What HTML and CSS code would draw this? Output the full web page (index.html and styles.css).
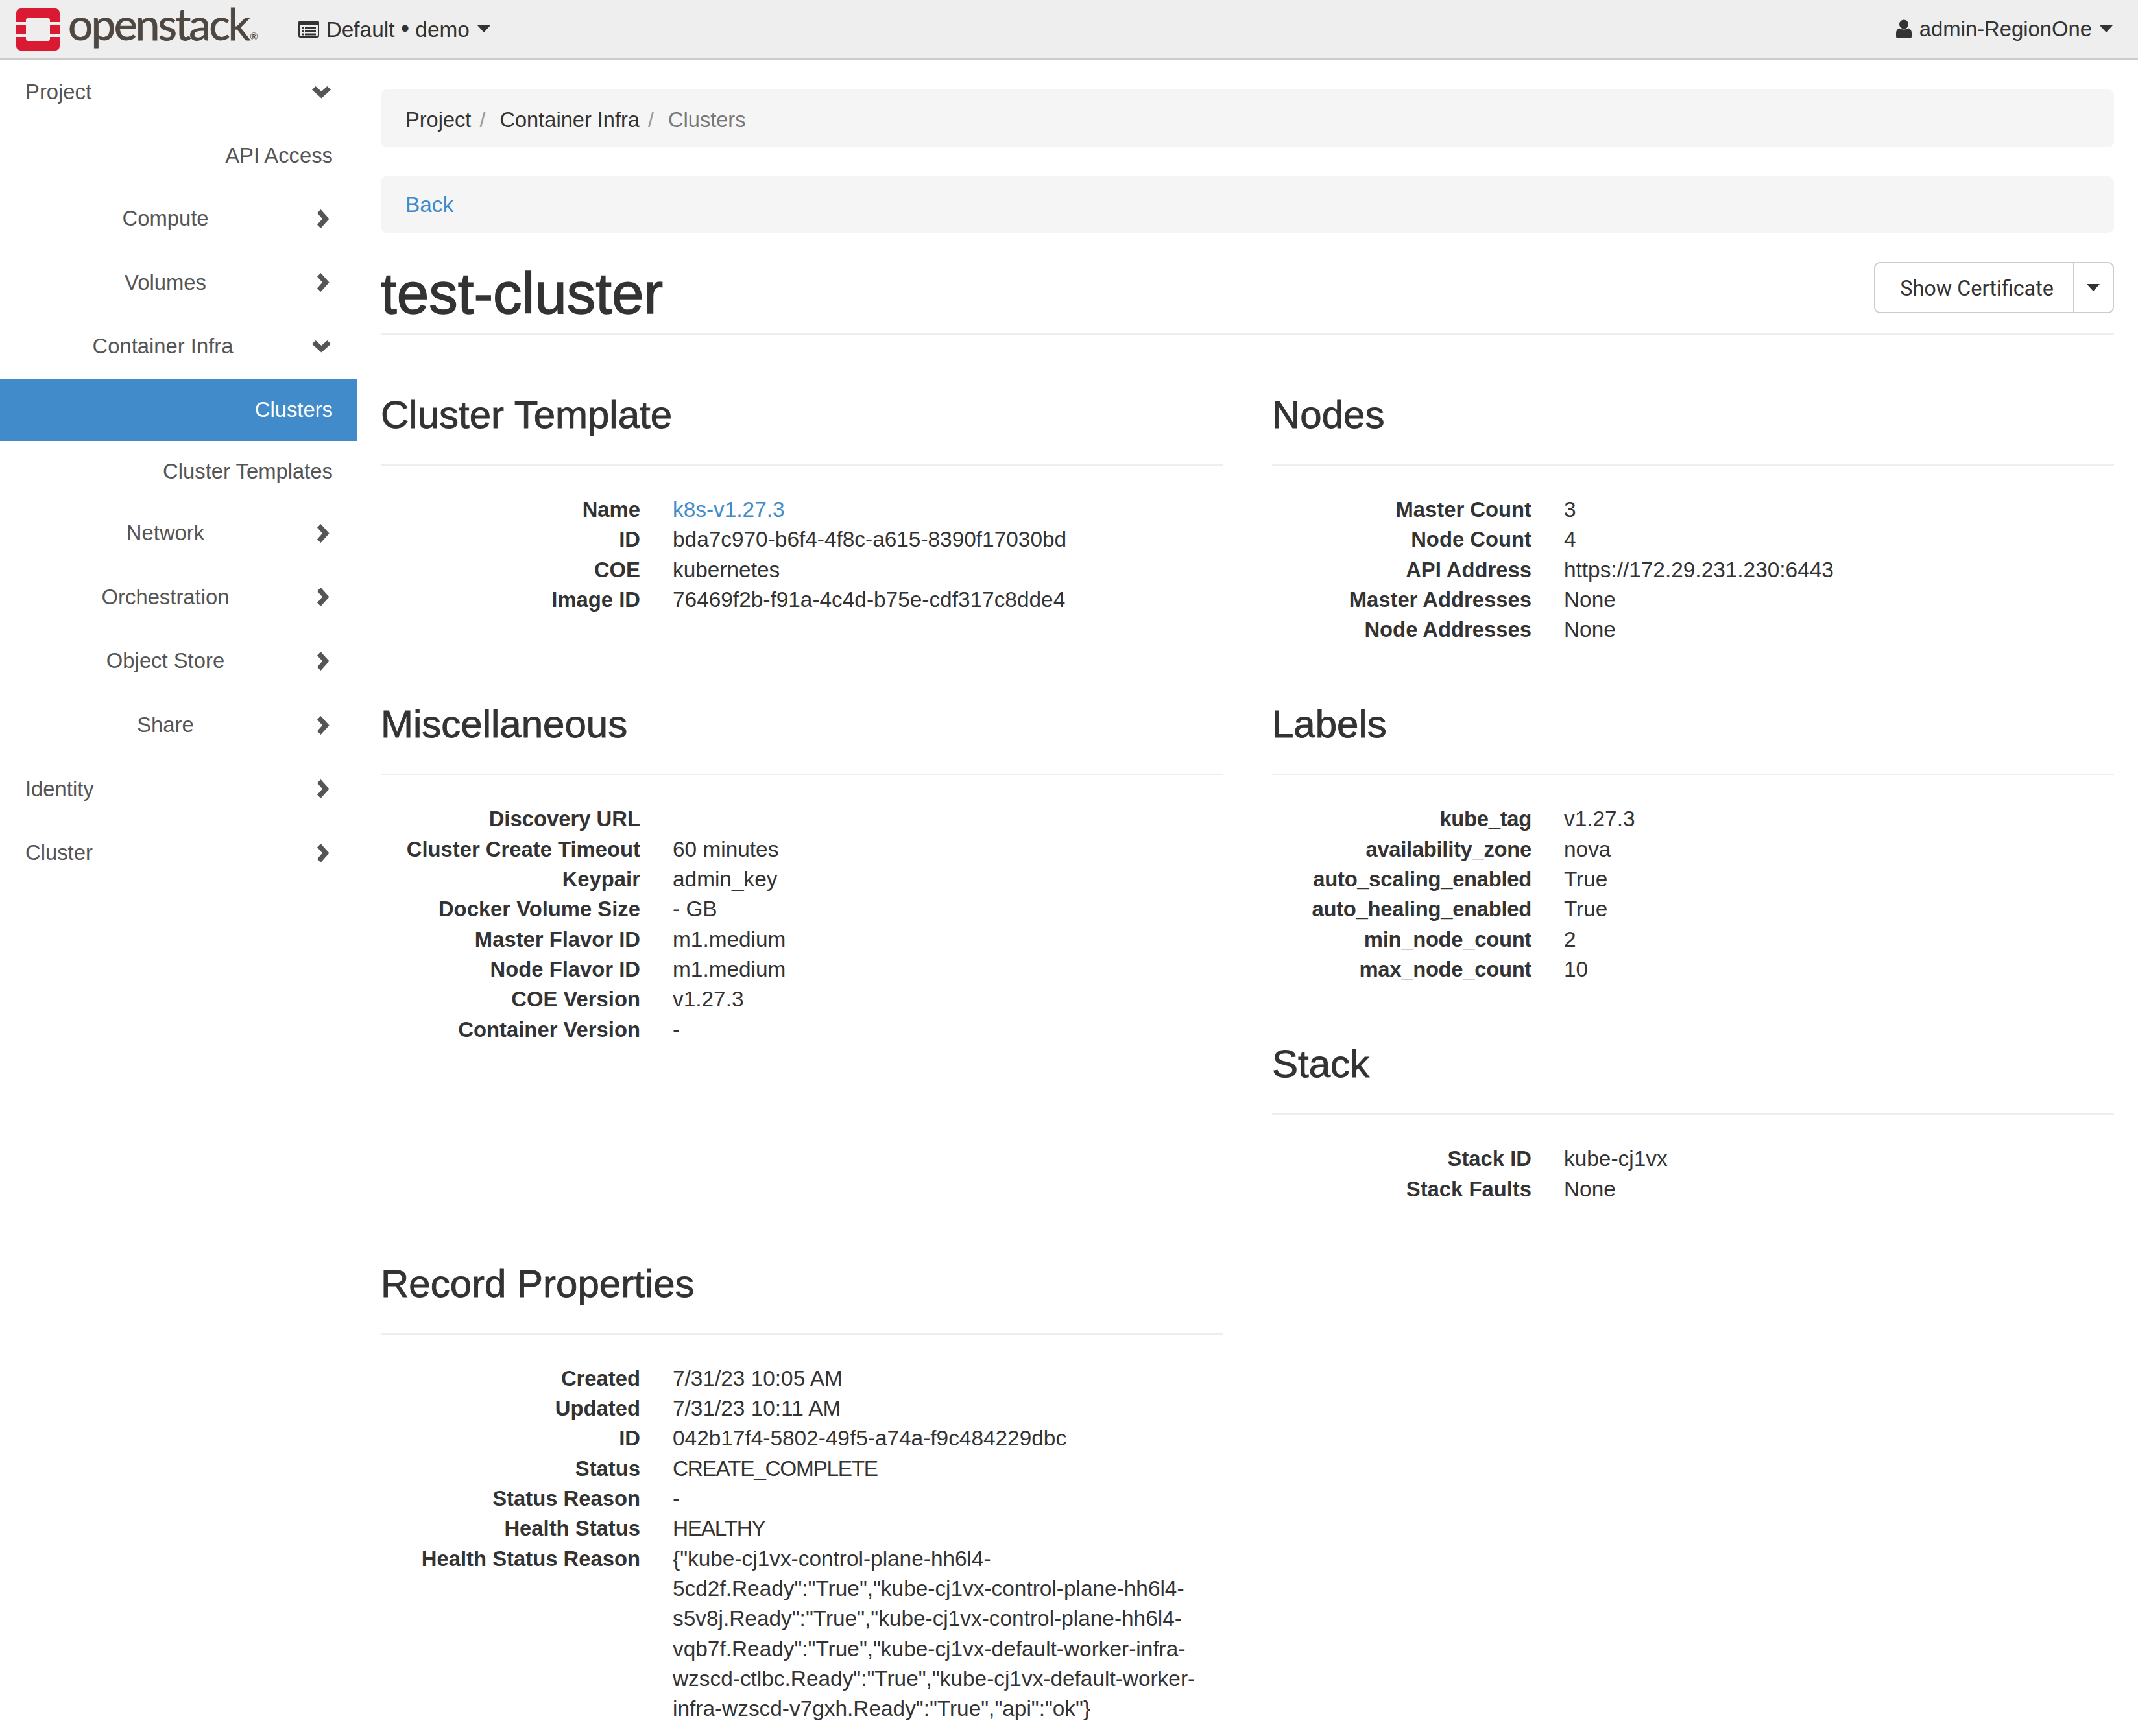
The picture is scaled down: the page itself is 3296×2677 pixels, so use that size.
FILE: index.html
```html
<!DOCTYPE html>
<html lang="en">
<head>
    <meta charset="UTF-8">
    <title>Cluster Details - OpenStack Dashboard</title>
    <link rel="stylesheet" href="styles.css">
</head>
<body>
    <header class="topbar">
        <a class="brand">
            <svg class="brand-mark" viewBox="0 0 67 65">
                <path fill="#da1a32" fill-rule="evenodd" d="M7 0H60A7 7 0 0 1 67 7V21H52V18A3 3 0 0 0 49 15H18A3 3 0 0 0 15 18V21H0V7A7 7 0 0 1 7 0ZM0 25H15V40H0ZM52 25H67V40H52ZM0 44H15V47A3 3 0 0 0 18 50H49A3 3 0 0 0 52 47V44H67V58A7 7 0 0 1 60 65H7A7 7 0 0 1 0 58Z"/>
            </svg>
            <span class="brand-name">openstack<span class="brand-reg">®</span></span>
        </a>
        <div class="context-menu">
            <svg class="icon-context" viewBox="0 0 32 26">
                <path fill="#333" fill-rule="evenodd" d="M3 0H29A3 3 0 0 1 32 3V23A3 3 0 0 1 29 26H3A3 3 0 0 1 0 23V3A3 3 0 0 1 3 0ZM2 7V22A2 2 0 0 0 4 24H28A2 2 0 0 0 30 22V7Z"/>
                <path fill="#333" d="M5 9.5H8V12.5H5ZM10 9.5H27V12.5H10ZM5 14.5H8V17.5H5ZM10 14.5H27V17.5H10ZM5 19.5H8V22.5H5ZM10 19.5H27V22.5H10Z"/>
            </svg>
            <span>Default <span class="dot">•</span> demo</span>
            <span class="caret"></span>
        </div>
        <div class="user-menu">
            <svg class="icon-user" viewBox="0 0 24 29">
                <circle cx="12" cy="7.5" r="7" fill="#333"/>
                <path fill="#333" d="M5 13.5C7 16 17 16 19 13.5C22 14.5 24 17 24 21V26A3 3 0 0 1 21 29H3A3 3 0 0 1 0 26V21C0 17 2 14.5 5 13.5Z"/>
            </svg>
            <span>admin-RegionOne</span>
            <span class="caret"></span>
        </div>
    </header>

    <div class="layout">
        <nav class="sidebar">
            <a class="nav-row nav-top">
                <span class="nav-label">Project</span>
                <svg class="chevron-down" viewBox="0 0 29 19"><polygon points="0,5.5 5.5,0 14.5,8 23.5,0 29,5.5 14.5,18.5"/></svg>
            </a>
            <a class="nav-leaf">API Access</a>
            <a class="nav-row">
                <span class="nav-label">Compute</span>
                <svg class="chevron-right" viewBox="0 0 19 29"><polygon points="5.5,0 18.5,14.5 5.5,29 0,23.5 8,14.5 0,5.5"/></svg>
            </a>
            <a class="nav-row">
                <span class="nav-label">Volumes</span>
                <svg class="chevron-right" viewBox="0 0 19 29"><polygon points="5.5,0 18.5,14.5 5.5,29 0,23.5 8,14.5 0,5.5"/></svg>
            </a>
            <a class="nav-row">
                <span class="nav-label">Container Infra</span>
                <svg class="chevron-down" viewBox="0 0 29 19"><polygon points="0,5.5 5.5,0 14.5,8 23.5,0 29,5.5 14.5,18.5"/></svg>
            </a>
            <a class="nav-leaf active">Clusters</a>
            <a class="nav-leaf nav-leaf-last">Cluster Templates</a>
            <a class="nav-row">
                <span class="nav-label">Network</span>
                <svg class="chevron-right" viewBox="0 0 19 29"><polygon points="5.5,0 18.5,14.5 5.5,29 0,23.5 8,14.5 0,5.5"/></svg>
            </a>
            <a class="nav-row">
                <span class="nav-label">Orchestration</span>
                <svg class="chevron-right" viewBox="0 0 19 29"><polygon points="5.5,0 18.5,14.5 5.5,29 0,23.5 8,14.5 0,5.5"/></svg>
            </a>
            <a class="nav-row">
                <span class="nav-label">Object Store</span>
                <svg class="chevron-right" viewBox="0 0 19 29"><polygon points="5.5,0 18.5,14.5 5.5,29 0,23.5 8,14.5 0,5.5"/></svg>
            </a>
            <a class="nav-row">
                <span class="nav-label">Share</span>
                <svg class="chevron-right" viewBox="0 0 19 29"><polygon points="5.5,0 18.5,14.5 5.5,29 0,23.5 8,14.5 0,5.5"/></svg>
            </a>
            <a class="nav-row nav-top">
                <span class="nav-label">Identity</span>
                <svg class="chevron-right" viewBox="0 0 19 29"><polygon points="5.5,0 18.5,14.5 5.5,29 0,23.5 8,14.5 0,5.5"/></svg>
            </a>
            <a class="nav-row nav-top">
                <span class="nav-label">Cluster</span>
                <svg class="chevron-right" viewBox="0 0 19 29"><polygon points="5.5,0 18.5,14.5 5.5,29 0,23.5 8,14.5 0,5.5"/></svg>
            </a>
        </nav>

        <main class="content">
            <ol class="breadcrumb">
                <li>Project<span class="crumb-sep">/</span></li>
                <li>Container Infra<span class="crumb-sep">/</span></li>
                <li class="crumb-current">Clusters</li>
            </ol>
            <div class="back-bar"><a class="link">Back</a></div>

            <div class="page-header">
                <h1>test-cluster</h1>
                <div class="btn-group">
                    <button class="btn">Show Certificate</button>
                    <button class="btn btn-toggle"><span class="caret"></span></button>
                </div>
            </div>

            <div class="detail-grid">
                <section class="detail">
                    <h2>Cluster Template</h2>
                    <dl>
                        <dt>Name</dt><dd><a class="link">k8s-v1.27.3</a></dd>
                        <dt>ID</dt><dd>bda7c970-b6f4-4f8c-a615-8390f17030bd</dd>
                        <dt>COE</dt><dd>kubernetes</dd>
                        <dt>Image ID</dt><dd>76469f2b-f91a-4c4d-b75e-cdf317c8dde4</dd>
                    </dl>
                </section>
                <section class="detail">
                    <h2>Nodes</h2>
                    <dl>
                        <dt>Master Count</dt><dd>3</dd>
                        <dt>Node Count</dt><dd>4</dd>
                        <dt>API Address</dt><dd>https://172.29.231.230:6443</dd>
                        <dt>Master Addresses</dt><dd>None</dd>
                        <dt>Node Addresses</dt><dd>None</dd>
                    </dl>
                </section>
                <section class="detail">
                    <h2>Miscellaneous</h2>
                    <dl>
                        <dt>Discovery URL</dt><dd></dd>
                        <dt>Cluster Create Timeout</dt><dd>60 minutes</dd>
                        <dt>Keypair</dt><dd>admin_key</dd>
                        <dt>Docker Volume Size</dt><dd>- GB</dd>
                        <dt>Master Flavor ID</dt><dd>m1.medium</dd>
                        <dt>Node Flavor ID</dt><dd>m1.medium</dd>
                        <dt>COE Version</dt><dd>v1.27.3</dd>
                        <dt>Container Version</dt><dd>-</dd>
                    </dl>
                </section>
                <div>
                    <section class="detail">
                        <h2>Labels</h2>
                        <dl>
                            <dt class="tight">kube_tag</dt><dd>v1.27.3</dd>
                            <dt class="tight">availability_zone</dt><dd>nova</dd>
                            <dt class="tight">auto_scaling_enabled</dt><dd>True</dd>
                            <dt class="tight">auto_healing_enabled</dt><dd>True</dd>
                            <dt class="tight">min_node_count</dt><dd>2</dd>
                            <dt class="tight">max_node_count</dt><dd>10</dd>
                        </dl>
                    </section>
                    <section class="detail">
                        <h2>Stack</h2>
                        <dl>
                            <dt>Stack ID</dt><dd>kube-cj1vx</dd>
                            <dt>Stack Faults</dt><dd>None</dd>
                        </dl>
                    </section>
                </div>
                <section class="detail">
                    <h2>Record Properties</h2>
                    <dl>
                        <dt>Created</dt><dd>7/31/23 10:05 AM</dd>
                        <dt>Updated</dt><dd>7/31/23 10:11 AM</dd>
                        <dt>ID</dt><dd>042b17f4-5802-49f5-a74a-f9c484229dbc</dd>
                        <dt>Status</dt><dd class="caps">CREATE_COMPLETE</dd>
                        <dt>Status Reason</dt><dd>-</dd>
                        <dt>Health Status</dt><dd class="caps">HEALTHY</dd>
                        <dt>Health Status Reason</dt><dd>{"kube-cj1vx-control-plane-hh6l4-<br>5cd2f.Ready":"True","kube-cj1vx-control-plane-hh6l4-<br>s5v8j.Ready":"True","kube-cj1vx-control-plane-hh6l4-<br>vqb7f.Ready":"True","kube-cj1vx-default-worker-infra-<br>wzscd-ctlbc.Ready":"True","kube-cj1vx-default-worker-<br>infra-wzscd-v7gxh.Ready":"True","api":"ok"}</dd>
                    </dl>
                </section>
            </div>
        </main>
    </div>
</body>
</html>
```

FILE: styles.css
```css
* {
    box-sizing: border-box;
}
html, body {
    height: 100%;
}
body {
    margin: 0;
    font-family: "Liberation Sans", Arial, sans-serif;
    font-size: 33.4px;
    line-height: 46.3px;
    color: #333;
    background: #fff;
    overflow: hidden;
}

/* top bar */
.topbar {
    display: flex;
    align-items: center;
    height: 92px;
    padding: 0 39px 0 25px;
    background-color: #eee;
    border-bottom: 2px solid #ccc;
}
.brand {
    display: flex;
    align-items: center;
}
.brand-mark {
    width: 67px;
    height: 65px;
}
.brand-name {
    margin: 2px 0 0 13px;
    font-family: Lato, sans-serif;
    font-size: 68px;
    line-height: 80px;
    letter-spacing: -3px;
    color: #4f4741;
    white-space: nowrap;
    -webkit-text-stroke: 0.8px #4f4741;
}
.brand-reg {
    margin-left: 2px;
    font-size: 15px;
    letter-spacing: 0;
    -webkit-text-stroke: 0;
}
.context-menu {
    display: flex;
    align-items: center;
    margin-left: 62px;
}
.dot {
    font-size: 38px;
}
.icon-context {
    width: 32px;
    height: 26px;
    margin-right: 11px;
}
.user-menu {
    display: flex;
    align-items: center;
    margin-left: auto;
    font-size: 32.8px;
}
.icon-user {
    width: 24px;
    height: 29px;
    margin-right: 12px;
}
.caret {
    display: inline-block;
    width: 0;
    height: 0;
    margin-left: 12px;
    border-top: 11px solid #333;
    border-left: 10px solid transparent;
    border-right: 10px solid transparent;
}

/* sidebar */
.layout {
    display: flex;
}
.sidebar {
    flex: 0 0 550px;
    width: 550px;
    padding-top: 1px;
    font-size: 32.8px;
}
.nav-row {
    display: flex;
    align-items: center;
    height: 98.7px;
    padding: 0 37px 0 39px;
    color: #555;
}
.nav-label {
    flex: 1;
    margin-right: 18px;
    text-align: center;
}
.nav-top .nav-label {
    margin-right: 0;
    text-align: left;
}
.nav-leaf {
    display: block;
    height: 96px;
    padding: 0 37px;
    line-height: 96px;
    text-align: right;
    color: #555;
}
.nav-leaf-last {
    height: 93px;
    line-height: 94px;
}
.nav-leaf.active {
    background-color: #428bca;
    color: #fff;
}
.chevron-down, .chevron-right {
    fill: #555;
}
.chevron-down {
    width: 29px;
    height: 19px;
    margin: 0 3px 0 0;
}
.chevron-right {
    width: 19px;
    height: 29px;
    margin-right: 5px;
}

/* main column */
.content {
    flex: 1;
    padding: 46px 37px 0;
}
.link {
    color: #428bca;
}
.breadcrumb {
    display: flex;
    height: 89px;
    margin: 0;
    padding: 24px 38px;
    font-size: 32.6px;
    list-style: none;
    background-color: #f5f5f5;
    border-radius: 9px;
}
.breadcrumb li {
    margin-right: 22px;
}
.crumb-sep {
    margin-left: 13px;
    color: #999;
}
.crumb-current {
    color: #777;
}
.back-bar {
    height: 87px;
    margin-top: 45px;
    padding: 21px 38px;
    background-color: #f5f5f5;
    border-radius: 9px;
}
.page-header {
    display: flex;
    align-items: flex-start;
    justify-content: space-between;
    height: 112px;
    margin-top: 45px;
    border-bottom: 2px solid #eee;
}
h1 {
    margin: 0;
    font-size: 89px;
    font-weight: normal;
    line-height: 96px;
    -webkit-text-stroke: 1.5px #333;
}
.btn-group {
    display: flex;
    height: 79px;
}
.btn {
    height: 79px;
    padding: 2px 30px 0 38px;
    font-family: Roboto, sans-serif;
    font-size: 32.4px;
    color: #333;
    background-color: #fff;
    border: 2px solid #ccc;
    border-radius: 9px 0 0 9px;
}
.btn-toggle {
    display: flex;
    align-items: center;
    width: 63px;
    padding: 0 0 0 19px;
    margin-left: -2px;
    border-radius: 0 9px 9px 0;
}
.btn-toggle .caret {
    margin: 0;
}

/* detail sections */
.detail-grid {
    display: grid;
    grid-template-columns: 1fr 1fr;
    column-gap: 76px;
    margin-top: 1px;
}
.detail {
    padding-top: 90px;
}
h2 {
    height: 111px;
    margin: 0;
    padding-bottom: 44px;
    font-size: 60px;
    font-weight: normal;
    line-height: 66px;
    border-bottom: 2px solid #eee;
    -webkit-text-stroke: 0.9px #333;
}
dl {
    display: grid;
    grid-template-columns: 400px 1fr;
    column-gap: 50px;
    margin: 45px 0 0;
}
dt {
    font-size: 32.8px;
    font-weight: bold;
    text-align: right;
}
.tight {
    letter-spacing: -0.3px;
}
dd {
    margin: 0;
    min-height: 46.3px;
}
.caps {
    letter-spacing: -1.3px;
}
```
